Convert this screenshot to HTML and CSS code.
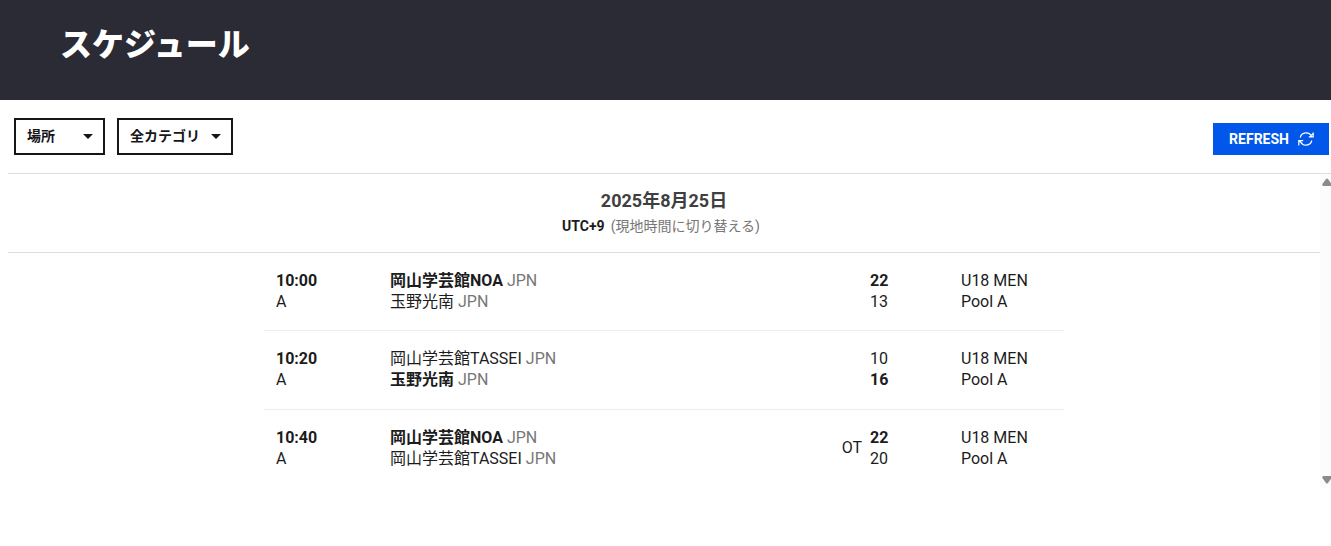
FILE: index.html
```html
<!DOCTYPE html>
<html lang="ja">
<head>
<meta charset="utf-8">
<title>スケジュール</title>
<link rel="stylesheet" href="styles.css">
</head>
<body>
<header class="page-header"><h1>スケジュール</h1></header>
<main>
  <div class="toolbar">
    <div class="filter filter-place">
      <select aria-label="場所"><option>場所</option></select>
      <svg class="caret" viewBox="0 0 10 5" aria-hidden="true"><path d="M0 0h10L5 5z"/></svg>
    </div>
    <div class="filter filter-category">
      <select aria-label="全カテゴリ"><option>全カテゴリ</option></select>
      <svg class="caret" viewBox="0 0 10 5" aria-hidden="true"><path d="M0 0h10L5 5z"/></svg>
    </div>
    <button class="refresh" type="button">REFRESH
      <svg viewBox="0 0 16 16" aria-hidden="true"><path d="M2.2 6.5A6 6 0 0 1 13.6 5.6M15.2 1.5v4.4h-4.4M15 2.6L12 5.6M13.8 9.5A6 6 0 0 1 2.4 10.4M.8 14.5v-4.9h4.4M1 9.8L4.4 12.6"/></svg>
    </button>
  </div>
  <section class="schedule">
    <div class="schedule-body">
      <div class="day">
        <h2>2025年8月25日</h2>
        <p><strong>UTC+9</strong><a href="#local">(現地時間に切り替える)</a></p>
      </div>
      <table class="games">
        <colgroup><col class="col-time"><col><col class="col-note"><col class="col-score"><col class="col-pool"></colgroup>
        <tbody>
          <tr>
            <td><b>10:00</b><br>A</td>
            <td><b>岡山学芸館NOA</b> <span class="country">JPN</span><br>玉野光南 <span class="country">JPN</span></td>
            <td class="note"></td>
            <td class="score"><b>22</b><br>13</td>
            <td>U18 MEN<br>Pool A</td>
          </tr>
          <tr>
            <td><b>10:20</b><br>A</td>
            <td>岡山学芸館TASSEI <span class="country">JPN</span><br><b>玉野光南</b> <span class="country">JPN</span></td>
            <td class="note"></td>
            <td class="score">10<br><b>16</b></td>
            <td>U18 MEN<br>Pool A</td>
          </tr>
          <tr>
            <td><b>10:40</b><br>A</td>
            <td><b>岡山学芸館NOA</b> <span class="country">JPN</span><br>岡山学芸館TASSEI <span class="country">JPN</span></td>
            <td class="note">OT</td>
            <td class="score"><b>22</b><br>20</td>
            <td>U18 MEN<br>Pool A</td>
          </tr>
        </tbody>
      </table>
    </div>
    <div class="scrollbar" aria-hidden="true">
      <svg viewBox="0 0 10 8"><path d="M4 1Q5 0 6 1L9.6 6Q10 8 8.600 8H1.400Q0 8 .4 6z"/></svg>
      <svg viewBox="0 0 10 8"><path d="M4 7Q5 8 6 7L9.6 2Q10 0 8.600 0H1.400Q0 0 .4 2z"/></svg>
    </div>
  </section>
</main>
</body>
</html>
```
FILE: styles.css
```css
* { box-sizing: border-box; }
body {
  margin: 0;
  background: #fff;
  color: #1c1c1c;
  font: 16px/21px Roboto, "Noto Sans CJK JP", sans-serif;
}
h1, h2, p { margin: 0; }
.page-header {
  padding: 21px 60px 31px;
  background: #2b2b35;
  color: #fff;
}
h1 { font-size: 32px; line-height: 48px; font-weight: 900; }
.toolbar {
  display: flex;
  align-items: flex-start;
  gap: 12px;
  padding: 18px 2px 18px 14px;
}
.filter { position: relative; }
.filter-place { width: 91px; }
.filter-category { width: 116px; }
.filter select {
  display: block;
  width: 100%;
  height: 37px;
  padding: 0 24px 2px 11px;
  border: 2px solid #15151a;
  border-radius: 0;
  background: #fff;
  color: #15151a;
  font: bold 14px/20px Roboto, "Noto Sans CJK JP", sans-serif;
  appearance: none;
}
.caret {
  position: absolute;
  top: 16px;
  right: 12px;
  width: 10px;
  height: 5px;
  fill: #15151a;
  pointer-events: none;
}
.refresh {
  display: flex;
  align-items: center;
  gap: 9px;
  height: 32px;
  margin: 5px 0 0 auto;
  padding: 0 15px 0 16px;
  border: 0;
  background: #0057ea;
  color: #fff;
  font: bold 14px/20px Roboto, sans-serif;
}
.refresh svg {
  width: 16px;
  height: 16px;
  fill: none;
  stroke: #fff;
  stroke-width: 1.2;
}
.schedule {
  display: flex;
  margin-left: 8px;
  border-top: 1px solid #dedede;
}
.schedule-body { flex: 1; }
.day {
  padding: 16px 0 15px;
  border-bottom: 1px solid #dedede;
  text-align: center;
}
.day h2 { color: #3f3f3f; font-size: 18px; line-height: 22px; }
.day p { padding: 4px 6px 0 0; font-size: 14px; }
.day a { margin-left: 6px; color: #767676; text-decoration: none; }
.games {
  width: 800px;
  max-width: 100%;
  margin: 0 auto;
  border-collapse: collapse;
  table-layout: fixed;
}
.games tr + tr { border-top: 1px solid #ececee; }
.games td { padding: 17px 12px 19px; vertical-align: top; }
.games tr:first-child td { padding-bottom: 18px; }
.games .note { padding: 0 0 4px; text-align: right; vertical-align: middle; }
.games .score { padding-left: 8px; }
.col-time { width: 114px; }
.col-note { width: 40px; }
.col-score { width: 87px; }
.col-pool { width: 115px; }
.country { color: #777; }
.scrollbar {
  display: flex;
  flex-direction: column;
  justify-content: space-between;
  width: 11px;
  padding: 4px 0 4px 2px;
  background: #fcfcfc;
}
.scrollbar svg { width: 10px; height: 8px; fill: #8b8b8b; }
```
